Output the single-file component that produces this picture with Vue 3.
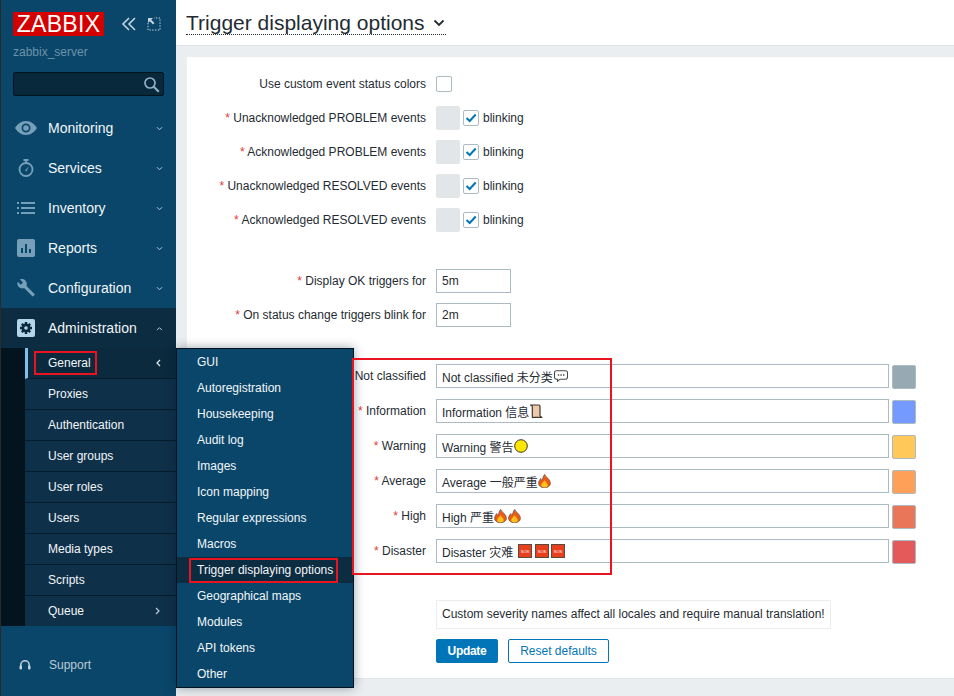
<template>
  <div class="page">
    <aside class="sidebar">
      <div class="brand">
        <div class="logo">ZABBIX</div>
        <svg class="collapse" width="16" height="14" viewBox="0 0 16 14"><path d="M8 1 2 7l6 6M14 1 8 7l6 6" fill="none" stroke="#c5d3dc" stroke-width="1.6"/></svg>
        <svg class="kiosk" width="14" height="14" viewBox="0 0 14 14"><path d="M1 6v7h12V1H7" fill="none" stroke="#c5d3dc" stroke-dasharray="1.4 1.4"/><path d="M1 1h5L4.2 2.8 7.5 6 6 7.5 2.8 4.2 1 6z" fill="#c5d3dc"/></svg>
      </div>
      <div class="server">zabbix_server</div>
      <div class="search">
        <svg width="17" height="17" viewBox="0 0 17 17"><circle cx="7" cy="7" r="5" fill="none" stroke="#8fb0c4" stroke-width="1.7"/><path d="m10.8 10.8 5 5" stroke="#8fb0c4" stroke-width="2.2"/></svg>
      </div>

      <nav class="nav">
        <div v-for="item in menu" :key="item.name" class="nav-item" :class="{ open: item.open }">
          <span class="nav-icon" v-html="item.icon"></span>
          <span class="nav-name">{{ item.name }}</span>
          <svg class="chev" width="7" height="5" viewBox="0 0 8 6"><path :d="item.open ? 'M1 5l3-3 3 3' : 'M1 1.500l3 3 3-3'" fill="none" stroke="#b9ccd8" stroke-width="1.2"/></svg>
        </div>
        <div class="sub-wrap">
          <div class="sub">
            <div v-for="(s, i) in subMenu" :key="s" class="sub-item" :class="{ active: i === 0 }">
              <span>{{ s }}</span>
              <svg v-if="i === 0" width="6" height="8" viewBox="0 0 6 8"><path d="M5 1 2 4l3 3" fill="none" stroke="#dbe5ec" stroke-width="1.3"/></svg>
              <svg v-if="s === 'Queue'" width="6" height="8" viewBox="0 0 6 8"><path d="m1 1 3 3-3 3" fill="none" stroke="#b9ccd8" stroke-width="1.2"/></svg>
            </div>
          </div>
        </div>
      </nav>

      <div class="support">
        <svg width="12" height="13" viewBox="0 0 12 13"><path d="M1.800 8V6a4.200 4.200 0 0 1 8.400 0v2" fill="none" stroke="#c5d3dc" stroke-width="1.500"/><rect x="0.500" y="6.500" width="2.500" height="4" rx="1" fill="#c5d3dc"/><rect x="9" y="6.500" width="2.500" height="4" rx="1" fill="#c5d3dc"/></svg>
        <span>Support</span>
      </div>
    </aside>

    <main class="main">
      <header class="top">
        <h1 class="title">
          <span>Trigger displaying options</span>
          <svg width="12" height="8" viewBox="0 0 12 8"><path d="M1.500 1.500 6 6l4.500-4.500" fill="none" stroke="#1f2c33" stroke-width="1.800"/></svg>
        </h1>
      </header>

      <section class="card">
        <div class="row">
          <label class="lbl">Use custom event status colors</label>
          <span class="check"></span>
        </div>
        <div v-for="e in events" :key="e" class="row">
          <label class="lbl"><i>*</i> {{ e }}</label>
          <span class="blank"></span>
          <span class="check on">
            <svg width="12" height="10" viewBox="0 0 12 10"><path d="m1.500 5 3.200 3 6-6.500" fill="none" stroke="#0275b8" stroke-width="2"/></svg>
          </span>
          <span class="blink">blinking</span>
        </div>

        <div class="row first-time">
          <label class="lbl"><i>*</i> Display OK triggers for</label>
          <div class="input small">5m</div>
        </div>
        <div class="row">
          <label class="lbl"><i>*</i> On status change triggers blink for</label>
          <div class="input small">2m</div>
        </div>

        <div class="severities">
          <div v-for="s in severities" :key="s.label" class="sev-row">
            <label class="lbl"><i v-if="s.label !== 'Not classified'">*</i> {{ s.label }}</label>
            <div class="input wide">
              <span>{{ s.text }}</span>
              <svg v-if="s.icon === 'bubble'" class="emoji bubble" width="14" height="12" viewBox="0 0 14 12"><path d="M2.500.7h9q2 0 2 2v4.500q0 2-2 2H6L3.500 11.300V9.200h-1q-2 0-2-2V2.700q0-2 2-2z" fill="#fff" stroke="#4a4a4a" stroke-width="1.100"/><path d="M3.800 5h1.400M6.400 5h1.400M9 5h1.400" stroke="#4a4a4a" stroke-width="1.300"/></svg>
              <svg v-if="s.icon === 'scroll'" class="emoji" width="14" height="15" viewBox="0 0 14 15"><path d="M1 1h8.800q1.200 0 1.200 1.500v9q0 1.500 2.300 1.800H4.800Q3.300 14.300 3.300 12.500V3.200Q3.300 1 1 1z" fill="#edc9ab" stroke="#43352c" stroke-width="1.200"/></svg>
              <svg v-if="s.icon === 'circle'" class="emoji" width="14" height="14" viewBox="0 0 14 14"><circle cx="7" cy="7" r="6.300" fill="#ffe600" stroke="#3b3b2a"/></svg>
              <template v-if="s.icon === 'fire'">
                <svg v-for="n in s.count" :key="n" class="emoji fire" width="13" height="14" viewBox="0 0 13 14"><path d="M6.700.4C7.300 3 12.400 5 12.400 9.200c0 2.900-2.600 4.500-5.900 4.500S.6 12.100.6 9.200C.6 7.200 1.900 5.600 2.700 4.500 3 5.600 3.600 6.200 4.300 6.200 4.800 4 5.300 2 6.700.4z" fill="#ef5a10" stroke="#6b5b50" stroke-width=".8"/><path d="M6.500 6.300c.6 1.500 3.300 2.700 3.300 5 0 1.500-1.500 2.200-3.300 2.200s-3.300-.7-3.300-2.200c0-2.300 2.700-3.500 3.300-5z" fill="#fdc01c"/></svg>
              </template>
              <template v-if="s.icon === 'sos'">
                <svg v-for="n in 3" :key="n" class="emoji sos" width="14" height="14" viewBox="0 0 14 14"><rect x=".5" y=".5" width="13" height="13" fill="#e8401c" stroke="#5a4a42"/><text x="7" y="8.500" font-size="4" fill="#fff" text-anchor="middle" font-family="Liberation Sans, sans-serif">SOS</text></svg>
              </template>
            </div>
            <span class="swatch" :style="{ background: s.color }"></span>
          </div>
        </div>

        <div class="note-row">
          <div class="note">Custom severity names affect all locales and require manual translation!</div>
        </div>
        <div class="buttons">
          <button class="btn primary">Update</button>
          <button class="btn alt">Reset defaults</button>
        </div>
      </section>
    </main>

    <div class="flyout">
      <div v-for="f in flyout" :key="f" class="fly-item" :class="{ active: f === 'Trigger displaying options' }">{{ f }}</div>
    </div>

    <span class="mark mark-general"></span>
    <span class="mark mark-trigger"></span>
    <span class="mark mark-form"></span>
  </div>
</template>

<script setup>
const menu = [
  { name: 'Monitoring', icon: '<svg width="22" height="14" viewBox="0 0 22 14"><path fill-rule="evenodd" d="M11 0c5 0 9 3.500 11 7-2 3.500-6 7-11 7S2 10.500 0 7c2-3.500 6-7 11-7zm0 2.500a4.500 4.500 0 1 0 0 9 4.500 4.500 0 0 0 0-9z" fill="#76a0b9"/><circle cx="11" cy="7" r="2.800" fill="#76a0b9"/></svg>' },
  { name: 'Services', icon: '<svg width="16" height="18" viewBox="0 0 16 18"><circle cx="8" cy="10.500" r="6.500" fill="none" stroke="#76a0b9" stroke-width="1.800"/><path d="M5.500 1h5M8 1v3" stroke="#76a0b9" stroke-width="1.800"/><path d="M7 11.500 11 7l-2.600 5.400z" fill="#76a0b9"/></svg>' },
  { name: 'Inventory', icon: '<svg width="18" height="12" viewBox="0 0 18 12"><path d="M0 1h2M4 1h14M0 6h2M4 6h14M0 11h2M4 11h14" stroke="#76a0b9" stroke-width="2"/></svg>' },
  { name: 'Reports', icon: '<svg width="18" height="18" viewBox="0 0 18 18"><rect width="18" height="18" rx="2" fill="#76a0b9"/><path d="M5 9v5M9 5v9M13 10v4" stroke="#0a466a" stroke-width="2"/></svg>' },
  { name: 'Configuration', icon: '<svg width="18" height="18" viewBox="0 0 18 18"><path d="M17.500 15 9.500 7c.7-2 .3-4-1.200-5.500C6.800.1 4.800-.3 3 .5l3 3-2.200 2.200-3-3C0 4.500.4 6.500 1.800 8c1.500 1.400 3.500 1.800 5.300 1.100l8 8a1 1 0 0 0 1.400 0l1-1a.8.8 0 0 0 0-1.100z" fill="#76a0b9"/></svg>' },
  { name: 'Administration', open: true, icon: '<svg width="18" height="18" viewBox="0 0 18 18"><rect width="18" height="18" rx="2" fill="#b4d6ea"/><path d="M9 3v12M3 9h12M4.800 4.800l8.400 8.400M13.200 4.800l-8.400 8.400" stroke="#0b2a3e" stroke-width="2.400"/><circle cx="9" cy="9" r="4.400" fill="#0b2a3e"/><circle cx="9" cy="9" r="1.800" fill="#b4d6ea"/></svg>' },
]

const subMenu = ['General', 'Proxies', 'Authentication', 'User groups', 'User roles', 'Users', 'Media types', 'Scripts', 'Queue']

const flyout = ['GUI', 'Autoregistration', 'Housekeeping', 'Audit log', 'Images', 'Icon mapping', 'Regular expressions', 'Macros', 'Trigger displaying options', 'Geographical maps', 'Modules', 'API tokens', 'Other']

const events = ['Unacknowledged PROBLEM events', 'Acknowledged PROBLEM events', 'Unacknowledged RESOLVED events', 'Acknowledged RESOLVED events']

const severities = [
  { label: 'Not classified', text: 'Not classified 未分类', icon: 'bubble', color: '#97aab3' },
  { label: 'Information', text: 'Information 信息', icon: 'scroll', color: '#7499ff' },
  { label: 'Warning', text: 'Warning 警告', icon: 'circle', color: '#ffc859' },
  { label: 'Average', text: 'Average 一般严重', icon: 'fire', count: 1, color: '#ffa059' },
  { label: 'High', text: 'High 严重', icon: 'fire', count: 2, color: '#e97659' },
  { label: 'Disaster', text: 'Disaster 灾难', icon: 'sos', color: '#e45959' },
]
</script>

<style scoped>
.page {
  position: relative;
  display: flex;
  width: 954px;
  height: 696px;
  overflow: hidden;
  background: #ebeef0;
  font-family: "Liberation Sans", "Noto Sans CJK SC", sans-serif;
  font-size: 12px;
  color: #1f2c33;
}

.sidebar {
  flex: 0 0 176px;
  display: flex;
  flex-direction: column;
  box-sizing: border-box;
  border-left: 1px solid #2a2a2a;
  background: #0a466a;
  color: #f2f6f8;
}

.brand {
  display: flex;
  align-items: center;
  height: 24px;
  margin: 12px 0 0 12px;
}

.logo {
  width: 91px;
  height: 24px;
  background: #d40000;
  color: #fff;
  font-size: 23px;
  line-height: 24px;
  text-align: center;
  letter-spacing: 0.3px;
}

.collapse {
  margin-left: 17px;
}

.kiosk {
  margin-left: 10px;
}

.server {
  margin: 9px 0 0 12px;
  height: 15px;
  color: #6d93aa;
  font-size: 12px;
  line-height: 15px;
}

.search {
  display: flex;
  align-items: center;
  justify-content: flex-end;
  box-sizing: border-box;
  width: 151px;
  height: 24px;
  margin: 12px 0 0 12px;
  padding-right: 3px;
  border: 1px solid #03141f;
  border-radius: 2px;
  background: #08283c;
}

.nav {
  margin-top: 12px;
}

.nav-item {
  display: flex;
  align-items: center;
  height: 40px;
  padding-right: 13px;
  font-size: 14px;
}

.nav-item.open {
  background: #0c2c41;
}

.nav-icon {
  display: flex;
  align-items: center;
  justify-content: center;
  width: 24px;
  margin-left: 13px;
}

.nav-name {
  flex: 1;
  margin-left: 10px;
}

.sub-wrap {
  padding-left: 24px;
  background: #04141e;
}

.sub-item {
  display: flex;
  align-items: center;
  justify-content: space-between;
  box-sizing: border-box;
  height: 31px;
  padding: 0 15px 0 23px;
  border-bottom: 1px solid #071c2a;
  background: #0f3049;
}

.sub-item:last-child {
  height: 30px;
  border-bottom: none;
}

.sub-item.active {
  border-left: 3px solid #7fbfee;
  padding-left: 20px;
  background: #0b2a3e;
}

.support {
  display: flex;
  align-items: center;
  gap: 18px;
  padding: 32px 0 0 18px;
  color: #bccbd5;
}

.main {
  flex: 1;
  display: flex;
  flex-direction: column;
  min-width: 0;
}

.top {
  box-sizing: border-box;
  height: 46px;
  padding: 12px 0 0 10px;
  border-bottom: 1px solid #dfe4e7;
  background: #fff;
}

.title {
  display: inline-flex;
  align-items: center;
  gap: 8px;
  margin: 0;
  padding-right: 1px;
  height: 22px;
  border-bottom: 1px dotted #1f2c33;
  font-size: 21px;
  font-weight: 400;
  line-height: 22px;
}

.card {
  box-sizing: border-box;
  height: 622px;
  margin: 11px 0 0 11px;
  padding: 15px 0 0 0;
  border-bottom: 1px solid #dfe4e7;
  background: #fff;
}

.row {
  display: flex;
  align-items: center;
  height: 24px;
  margin-bottom: 10px;
}

.first-time {
  margin-top: 37px;
}

.lbl {
  flex: 0 0 239px;
  box-sizing: border-box;
  text-align: right;
  margin-right: 10px;
}

.lbl i {
  color: #e33734;
  font-style: normal;
}

.check {
  display: flex;
  align-items: center;
  justify-content: center;
  box-sizing: border-box;
  width: 16px;
  height: 16px;
  border: 1px solid #acbbc2;
  border-radius: 2px;
  background: #fff;
}

.blank {
  width: 24px;
  height: 24px;
  margin-right: 3px;
  border-radius: 2px;
  background: #e3e6e8;
}

.blink {
  margin-left: 4px;
}

.input {
  display: flex;
  align-items: center;
  box-sizing: border-box;
  height: 24px;
  padding: 0 5px;
  border: 1px solid #acbbc2;
  background: #fff;
}

.small {
  width: 75px;
}

.wide {
  width: 453px;
}

.severities {
  margin-top: 37px;
}

.sev-row {
  display: flex;
  align-items: flex-start;
  height: 25px;
  margin-bottom: 10px;
}

.sev-row .lbl {
  line-height: 24px;
}

.swatch {
  box-sizing: border-box;
  width: 24px;
  height: 24px;
  margin: 1px 0 0 3px;
  border: 1px solid #acbbc2;
  border-radius: 2px;
}

.emoji {
  flex: none;
}

.bubble {
  margin-left: 1px;
}

.fire {
  margin-right: 1px;
}

.sos {
  margin-right: 2.500px;
}

span + .sos {
  margin-left: 5px;
}

.note-row {
  margin: 36px 0 0 249px;
}

.note {
  display: inline-block;
  padding: 6px 5px;
  border: 1px solid #ebeef0;
  background: #fff;
  line-height: 15px;
}

.buttons {
  display: flex;
  gap: 10px;
  margin: 10px 0 0 249px;
}

.btn {
  box-sizing: border-box;
  height: 24px;
  padding: 0;
  border: 1px solid #0275b8;
  border-radius: 2px;
  font-family: inherit;
  font-size: 12px;
}

.primary {
  width: 62px;
  background: #0275b8;
  color: #fff;
  font-weight: 700;
  letter-spacing: -0.3px;
}

.alt {
  width: 101px;
  background: #fff;
  color: #0275b8;
}

.flyout {
  position: absolute;
  top: 348px;
  left: 176px;
  box-sizing: border-box;
  width: 178px;
  height: 340px;
  border: 1px solid #03141f;
  background: #0a466a;
  color: #f2f6f8;
  box-shadow: 0 0 10px rgba(0, 30, 50, 0.4);
}

.fly-item {
  height: 26px;
  padding-left: 20px;
  line-height: 26px;
}

.fly-item.active {
  background: #0c2c41;
}

.mark {
  position: absolute;
  box-sizing: border-box;
  border: 2px solid #e8141f;
  pointer-events: none;
}

.mark-general {
  top: 351px;
  left: 34px;
  width: 63px;
  height: 24px;
}

.mark-trigger {
  top: 558px;
  left: 189px;
  width: 149px;
  height: 25px;
}

.mark-form {
  top: 358px;
  left: 352px;
  width: 260px;
  height: 217px;
}
</style>
